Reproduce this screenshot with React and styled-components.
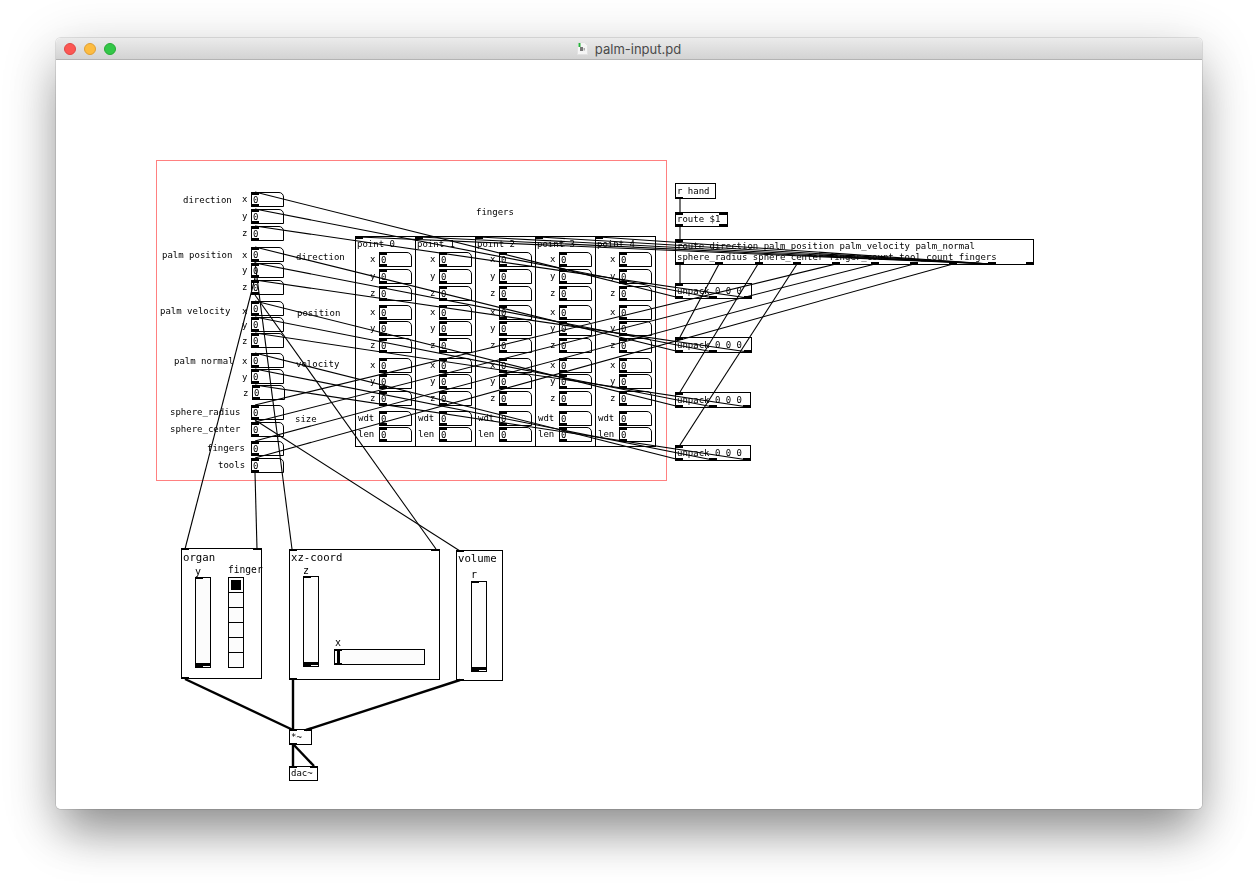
import React from "react";
import styled, { createGlobalStyle } from "styled-components";

const OX = 56;
const OY = 60;
const MONO = `"DejaVu Sans Mono", "Liberation Mono", monospace`;

const Global = createGlobalStyle`
  html, body { margin: 0; padding: 0; background: #fff; }
`;

const Page = styled.div`
  width: 1258px;
  height: 883px;
  padding: 38px 56px 0;
  box-sizing: border-box;
  overflow: hidden;
  background: #fff;
`;

const Win = styled.div`
  width: 1146px;
  height: 771px;
  display: flex;
  flex-direction: column;
  border-radius: 5px;
  background: #fff;
  overflow: hidden;
`;

const WinShadow = styled.div`
  width: 1146px;
  height: 771px;
  border-radius: 5px;
  box-shadow: 0 30px 44px -8px rgba(0, 0, 0, 0.34), 0 12px 56px 0 rgba(0, 0, 0, 0.2), 0 0 0 1px rgba(0, 0, 0, 0.1);
`;

const TitleBar = styled.div`
  flex: 0 0 22px;
  height: 22px;
  box-sizing: border-box;
  position: relative;
  display: flex;
  align-items: center;
  justify-content: center;
  gap: 7px;
  background: linear-gradient(#ebebeb, #d3d3d3);
  border-bottom: 1px solid #b3b3b3;
`;

const Lights = styled.div`
  position: absolute;
  left: 8px;
  top: 5px;
  display: flex;
  gap: 8px;
`;

const Light = styled.span`
  width: 12px;
  height: 12px;
  border-radius: 50%;
  box-sizing: border-box;
  background: ${(p) => p.$c};
  border: 1px solid ${(p) => p.$b};
`;

const TitleText = styled.span`
  font: 13px "Inter", "Liberation Sans", sans-serif;
  color: #4a4a4a;
`;

const Canvas = styled.div`
  position: relative;
  flex: 1;
  font: 9px ${MONO};
  color: #000;
  will-change: transform;
`;

const at = (p) => `left: ${p.$x - OX}px; top: ${p.$y - OY}px;`;

const RedFrame = styled.div`
  position: absolute;
  ${at}
  width: 511px;
  height: 321px;
  box-sizing: border-box;
  border: 1px solid #ff8080;
`;

const Label = styled.span`
  position: absolute;
  ${at}
  line-height: 11px;
  white-space: pre;
  font-size: ${(p) => p.$size || 9}px;
`;

const Atom = styled.div`
  position: absolute;
  ${at}
  width: 33px;
  height: 15px;
  box-sizing: border-box;
  border: 1px solid #000;
  border-top-right-radius: 5px;
  background: #fff;
  padding-left: 1px;
  line-height: 14px;
  &::before,
  &::after {
    content: "";
    position: absolute;
    left: -1px;
    width: 8px;
    height: 3px;
    background: #000;
  }
  &::before { top: -1px; }
  &::after { bottom: -1px; }
`;

const Box = styled.div`
  position: absolute;
  ${at}
  width: ${(p) => p.$w}px;
  height: ${(p) => p.$h}px;
  box-sizing: border-box;
  border: 1px solid #000;
  background: #fff;
  white-space: pre;
  line-height: ${(p) => p.$lh || 13}px;
  padding: ${(p) => p.$pt || 0}px 0 0 1px;
`;

const Port = styled.i`
  position: absolute;
  left: ${(p) => p.$l - 1}px;
  ${(p) => (p.$bottom ? "bottom: -1px;" : "top: -1px;")}
  width: 8px;
  height: ${(p) => p.$t || 2}px;
  background: #000;
`;

const Panel = styled.div`
  position: absolute;
  ${at}
  width: ${(p) => p.$w}px;
  height: ${(p) => p.$h}px;
  box-sizing: border-box;
  border: 1px solid #000;
`;

const Slider = styled.div`
  position: absolute;
  ${at}
  width: ${(p) => p.$w}px;
  height: ${(p) => p.$h}px;
  box-sizing: border-box;
  border: 1px solid #000;
  background: #fcfcfc;
  &::before,
  &::after {
    content: "";
    position: absolute;
    left: 0;
    width: 7px;
    height: 1px;
    background: #000;
  }
  &::before { top: 0; }
  &::after { bottom: 0; }
`;

const VKnob = styled.i`
  position: absolute;
  left: 0;
  right: 0;
  bottom: 1px;
  height: 3px;
  background: #000;
`;

const HKnob = styled.i`
  position: absolute;
  left: 2px;
  top: 0;
  bottom: 0;
  width: 3px;
  background: #000;
`;

const RadioCol = styled.div`
  position: absolute;
  ${at}
  width: 16px;
  display: flex;
  flex-direction: column;
  box-sizing: border-box;
  border: 1px solid #000;
  border-bottom: none;
  background: #fcfcfc;
`;

const RadioCell = styled.div`
  height: 15px;
  box-sizing: border-box;
  border-bottom: 1px solid #000;
  display: flex;
  align-items: center;
  justify-content: center;
`;

const RadioMark = styled.i`
  width: 10px;
  height: 10px;
  background: #000;
`;

const Wires = styled.svg`
  position: absolute;
  left: 0;
  top: 0;
  width: 1146px;
  height: 749px;
  pointer-events: none;
`;

const Wire = styled.line`
  stroke: #000;
  stroke-width: ${(p) => (p.$sig ? 2.4 : 1.1)};
`;

const Ports = ({ top = [], bottom = [], t }) => (
  <>
    {top.map((l) => <Port key={"t" + l} $l={l} $t={t} />)}
    {bottom.map((l) => <Port key={"b" + l} $l={l} $t={t} $bottom />)}
  </>
);

const LEFT_ATOMS = [192, 209, 226, 247, 263, 280, 301, 317, 333, 353, 369, 405, 422, 441, 458];
const LEFT_LABELS = [
  ["direction", 183, 195], ["palm position", 162, 250], ["palm velocity", 160, 306],
  ["palm normal", 174, 356], ["sphere_radius", 170, 407], ["sphere_center", 170, 424],
  ["fingers", 207, 443], ["tools", 218, 460],
];
const AXES = [
  ["x", 242, 194], ["y", 242, 211], ["z", 242, 228], ["x", 242, 250], ["y", 242, 265], ["z", 242, 282],
  ["x", 242, 306], ["y", 242, 320], ["z", 242, 336], ["x", 242, 356], ["y", 242, 372], ["z", 243, 388],
];
const MID = [["direction", 296, 252], ["position", 297, 308], ["velocity", 296, 359], ["size", 295, 414], ["fingers", 476, 207]];

const COL_ROWS = [
  ["x", 252], ["y", 269], ["z", 286], ["x", 305], ["y", 321], ["z", 338],
  ["x", 358], ["y", 374], ["z", 391],
];
const COLS = [0, 1, 2, 3, 4];

const OUT = [680, 713, 748];
const UNPACKS = [
  { y: 283, bottom: 298, w: 76, targets: [192, 209, 226] },
  { y: 337, bottom: 352, w: 76, targets: [247, 263, 280] },
  { y: 392, bottom: 407, w: 75, targets: [301, 317, 333] },
  { y: 445, bottom: 460, w: 75, targets: [353, 369, 385] },
];
const ROUTE_OUT = [676, 715, 755, 793, 832, 871, 910, 949, 988, 1026];

const controlWires = [
  [680, 198, 680, 212],
  [680, 226, 680, 240],
  [680, 264, 680, 283],
  [719, 264, 680, 337],
  [758, 264, 680, 392],
  [797, 264, 680, 445],
  [836, 264, 255, 405],
  [875, 264, 255, 422],
  [914, 264, 255, 441],
  [953, 264, 255, 458],
  ...COLS.map((i) => [359 + 60 * i, 237, 991, 264]),
  ...UNPACKS.flatMap((u) => u.targets.map((t, i) => [255, t, OUT[i], u.bottom])),
  [255, 262, 292, 549],
  [255, 278, 185, 549],
  [255, 295, 436, 549],
  [255, 420, 460, 551],
  [255, 473, 257, 549],
];
const signalWires = [
  [185, 679, 293, 730],
  [293, 680, 293, 730],
  [460, 680, 306, 730],
  [293, 744, 293, 766],
  [293, 744, 314, 766],
];

export default function App() {
  return (
    <Page>
      <Global />
      <WinShadow>
        <Win>
          <TitleBar>
            <Lights>
              <Light $c="#fc5753" $b="#df4744" />
              <Light $c="#fdbc40" $b="#de9f34" />
              <Light $c="#33c748" $b="#27aa35" />
            </Lights>
            <svg width="11" height="13" viewBox="0 0 11 13">
              <path d="M0.5 0.5H7.5L10.5 3.5V12.5H0.5Z" fill="#f6f6f6" stroke="#e2e2e2" />
              <rect x="1.5" y="1" width="2" height="4" fill="#27b13a" />
              <rect x="3" y="5" width="3" height="4" fill="#777" />
              <rect x="6.5" y="6" width="1.5" height="2.5" fill="#aaa" />
            </svg>
            <TitleText>palm-input.pd</TitleText>
          </TitleBar>
          <Canvas>
            <RedFrame $x={156} $y={160} />

            {LEFT_LABELS.map(([t, x, y]) => <Label key={t} $x={x} $y={y}>{t}</Label>)}
            {AXES.map(([t, x, y], i) => <Label key={i} $x={x} $y={y}>{t}</Label>)}
            {LEFT_ATOMS.map((y) => <Atom key={y} $x={251} $y={y}>0</Atom>)}
            <Atom $x={252} $y={385}>0</Atom>
            {MID.map(([t, x, y]) => <Label key={t} $x={x} $y={y}>{t}</Label>)}

            {COLS.map((i) => {
              const x = 355 + 60 * i;
              return (
                <React.Fragment key={i}>
                  <Panel $x={x} $y={236} $w={61} $h={211}>
                    <Port $l={0} $t={3} />
                  </Panel>
                  <Label $x={x + 2} $y={239}>{`point ${i}`}</Label>
                  {COL_ROWS.map(([t, y]) => (
                    <React.Fragment key={y}>
                      <Label $x={x + 15} $y={y + 2}>{t}</Label>
                      <Atom $x={x + 24} $y={y}>0</Atom>
                    </React.Fragment>
                  ))}
                  <Label $x={x + 3} $y={413}>wdt</Label>
                  <Atom $x={x + 24} $y={411}>0</Atom>
                  <Label $x={x + 3} $y={429}>len</Label>
                  <Atom $x={x + 24} $y={427}>0</Atom>
                </React.Fragment>
              );
            })}

            <Box $x={675} $y={183} $w={41} $h={16} $pt={1}>
              r hand
              <Ports bottom={[0]} />
            </Box>
            <Box $x={675} $y={212} $w={53} $h={15}>
              route $1
              <Ports top={[0, 44]} bottom={[0, 44]} t={3} />
            </Box>
            <Box $x={675} $y={239} $w={359} $h={26} $lh={11} $pt={1}>
              {"route direction palm_position palm_velocity palm_normal\nsphere_radius sphere_center finger_count tool_count fingers"}
              <Ports top={[0]} bottom={ROUTE_OUT.map((x) => x - 675)} t={3} />
            </Box>
            {UNPACKS.map((u) => (
              <Box key={u.y} $x={675} $y={u.y} $w={u.w + 1} $h={u.bottom - u.y + 1} $pt={1}>
                unpack 0 0 0
                <Ports top={[0]} bottom={[0, 34, u.w - 7]} t={3} />
              </Box>
            ))}

            <Panel $x={181} $y={548} $w={81} $h={131}>
              <Ports top={[0, 72]} bottom={[0]} />
            </Panel>
            <Label $x={183} $y={552} $size={10.7}>organ</Label>
            <Label $x={195} $y={566} $size={10}>y</Label>
            <Label $x={228} $y={564} $size={9.6}>finger</Label>
            <Slider $x={195} $y={577} $w={16} $h={91}><VKnob /></Slider>
            <RadioCol $x={228} $y={577}>
              <RadioCell><RadioMark /></RadioCell>
              <RadioCell /><RadioCell /><RadioCell /><RadioCell /><RadioCell />
            </RadioCol>

            <Panel $x={289} $y={549} $w={151} $h={131}>
              <Ports top={[0, 142]} bottom={[0]} />
            </Panel>
            <Label $x={291} $y={552} $size={10.7}>xz-coord</Label>
            <Label $x={303} $y={565} $size={10}>z</Label>
            <Label $x={335} $y={637} $size={10}>x</Label>
            <Slider $x={303} $y={576} $w={16} $h={91}><VKnob /></Slider>
            <Slider $x={334} $y={649} $w={91} $h={16}><HKnob /></Slider>

            <Panel $x={456} $y={550} $w={47} $h={131}>
              <Ports top={[0]} bottom={[0]} />
            </Panel>
            <Label $x={458} $y={553} $size={10.7}>volume</Label>
            <Label $x={471} $y={569} $size={10}>r</Label>
            <Slider $x={471} $y={581} $w={16} $h={91}><VKnob /></Slider>

            <Box $x={289} $y={729} $w={23} $h={16} $pt={1}>
              *~
              <Ports top={[0, 15]} bottom={[0]} />
            </Box>
            <Box $x={289} $y={766} $w={29} $h={15}>
              dac~
              <Ports top={[0, 21]} />
            </Box>

            <Wires viewBox={`${OX} ${OY} 1146 749`}>
              {controlWires.map(([a, b, c, d], i) => <Wire key={i} x1={a} y1={b} x2={c} y2={d} />)}
              {signalWires.map(([a, b, c, d], i) => <Wire key={i} $sig x1={a} y1={b} x2={c} y2={d} />)}
            </Wires>
          </Canvas>
        </Win>
      </WinShadow>
    </Page>
  );
}
